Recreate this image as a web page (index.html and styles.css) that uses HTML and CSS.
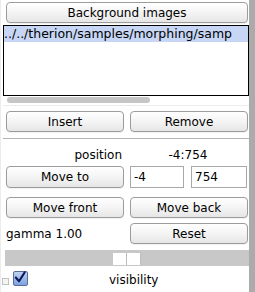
FILE: index.html
```html
<!DOCTYPE html>
<html lang="en">
<head>
    <meta charset="UTF-8">
    <title>Background images</title>
    <link rel="stylesheet" href="styles.css">
</head>
<body>
    <div class="panel">
        <div class="main">
            <button class="button wide">Background images</button>

            <div class="list">
                <div class="list-item selected">../../therion/samples/morphing/samp</div>
            </div>
            <div class="hscroll">
                <div class="hscroll-thumb"></div>
            </div>

            <div class="row row-insert">
                <button class="button">Insert</button>
                <button class="button">Remove</button>
            </div>

            <div class="separator"></div>

            <div class="row row-position">
                <div class="label-right">position</div>
                <div class="label-center">-4:754</div>
            </div>

            <div class="row row-move">
                <button class="button">Move to</button>
                <div class="inputs">
                    <input class="field field-x" type="text" value="-4">
                    <input class="field field-y" type="text" value="754">
                </div>
            </div>

            <div class="row row-order">
                <button class="button">Move front</button>
                <button class="button">Move back</button>
            </div>

            <div class="row row-gamma">
                <div class="label-left">gamma 1.00</div>
                <button class="button">Reset</button>
            </div>

            <div class="slider">
                <div class="slider-thumb"></div>
                <div class="slider-thumb"></div>
            </div>

            <div class="row-check">
                <span class="tiny-box"></span>
                <span class="checkbox">
                    <svg width="15" height="15" viewBox="0 0 15 15">
                        <path d="M3 7.5 L6.5 11.5 L12.5 2" fill="none" stroke="#0b1a5a" stroke-width="2.2" stroke-linecap="round" stroke-linejoin="round"/>
                    </svg>
                </span>
                <span class="check-label">visibility</span>
            </div>
        </div>
        <div class="edge"></div>
    </div>
</body>
</html>
```

FILE: styles.css
```css
body {
    margin: 0;
    font-family: "DejaVu Sans", "Liberation Sans", sans-serif;
    font-size: 12px;
    color: #000;
    background: #fff;
}
.panel {
    display: flex;
    width: 255px;
    height: 292px;
    overflow: hidden;
}
.main {
    width: 246px;
    padding: 2px 0 0 3px;
    box-shadow: inset 1px 0 0 #ececec;
}
.edge {
    width: 6px;
    background: #ababab;
}
.button {
    display: block;
    height: 21px;
    padding: 0;
    border: 1px solid #9c9c9c;
    border-radius: 4px;
    background: linear-gradient(#ffffff, #f4f4f4 50%, #e6e6e6);
    font-family: inherit;
    font-size: 12px;
    color: #000;
    box-shadow: 0 1px 1px rgba(0,0,0,0.06);
}
.wide {
    width: 242px;
    margin-left: 3px;
}
.list {
    margin-top: 2px;
    height: 69px;
    border: 1px solid #000;
    background: #fff;
}
.list-item {
    height: 16px;
    line-height: 16px;
    white-space: nowrap;
    overflow: hidden;
    font-size: 12.5px;
}
.selected {
    background: #c7d6f5;
}
.hscroll {
    height: 8px;
    padding: 1px 0 0 4px;
    border-bottom: 1px solid #ececec;
}
.hscroll-thumb {
    width: 143px;
    height: 6px;
    border-radius: 3px;
    background: #c6c6c6;
}
.row {
    display: flex;
    gap: 6px;
    padding-left: 3px;
}
.row .button {
    width: 118px;
}
.row-insert {
    margin-top: 5px;
}
.separator {
    height: 1px;
    margin-top: 6px;
    background: #b4b4b4;
}
.row-position {
    height: 17px;
    margin-top: 8px;
    line-height: 17px;
}
.label-right {
    width: 116px;
    text-align: right;
}
.label-center {
    width: 120px;
    text-align: center;
}
.row-move {
    margin-top: 2px;
}
.row-move .button {
    height: 22px;
}
.inputs {
    display: flex;
    gap: 7px;
}
.field {
    height: 22px;
    box-sizing: border-box;
    padding: 0 3px;
    border: 1px solid #a8a8a8;
    font-family: inherit;
    font-size: 12px;
    outline: none;
}
.field-x {
    width: 54px;
}
.field-y {
    width: 56px;
}
.row-order {
    margin-top: 9px;
}
.row-gamma {
    margin-top: 5px;
    align-items: center;
}
.label-left {
    width: 118px;
}
.slider {
    display: flex;
    height: 16px;
    margin: 6px 0 0 2px;
    padding: 3px 0 0 108px;
    box-sizing: border-box;
    background: #c8c8c8;
}
.slider-thumb {
    width: 13px;
    height: 12px;
    background: #fff;
    border-right: 1px solid #bdbdbd;
}
.row-check {
    display: flex;
    align-items: center;
    height: 18px;
    margin-top: 3px;
}
.tiny-box {
    width: 5px;
    height: 5px;
    margin: 7px 4px 0 -1px;
    border: 1px solid #c0c0c0;
    background: #f4f4f4;
}
.checkbox {
    display: flex;
    width: 15px;
    height: 15px;
    box-sizing: border-box;
    border: 1px solid #5a6a9a;
    border-radius: 2px;
    background: linear-gradient(#bfd2f2, #7ea2e0);
}
.checkbox svg {
    margin: -2px 0 0 -1px;
}
.check-label {
    margin-left: 81px;
    padding-top: 3px;
}
```
